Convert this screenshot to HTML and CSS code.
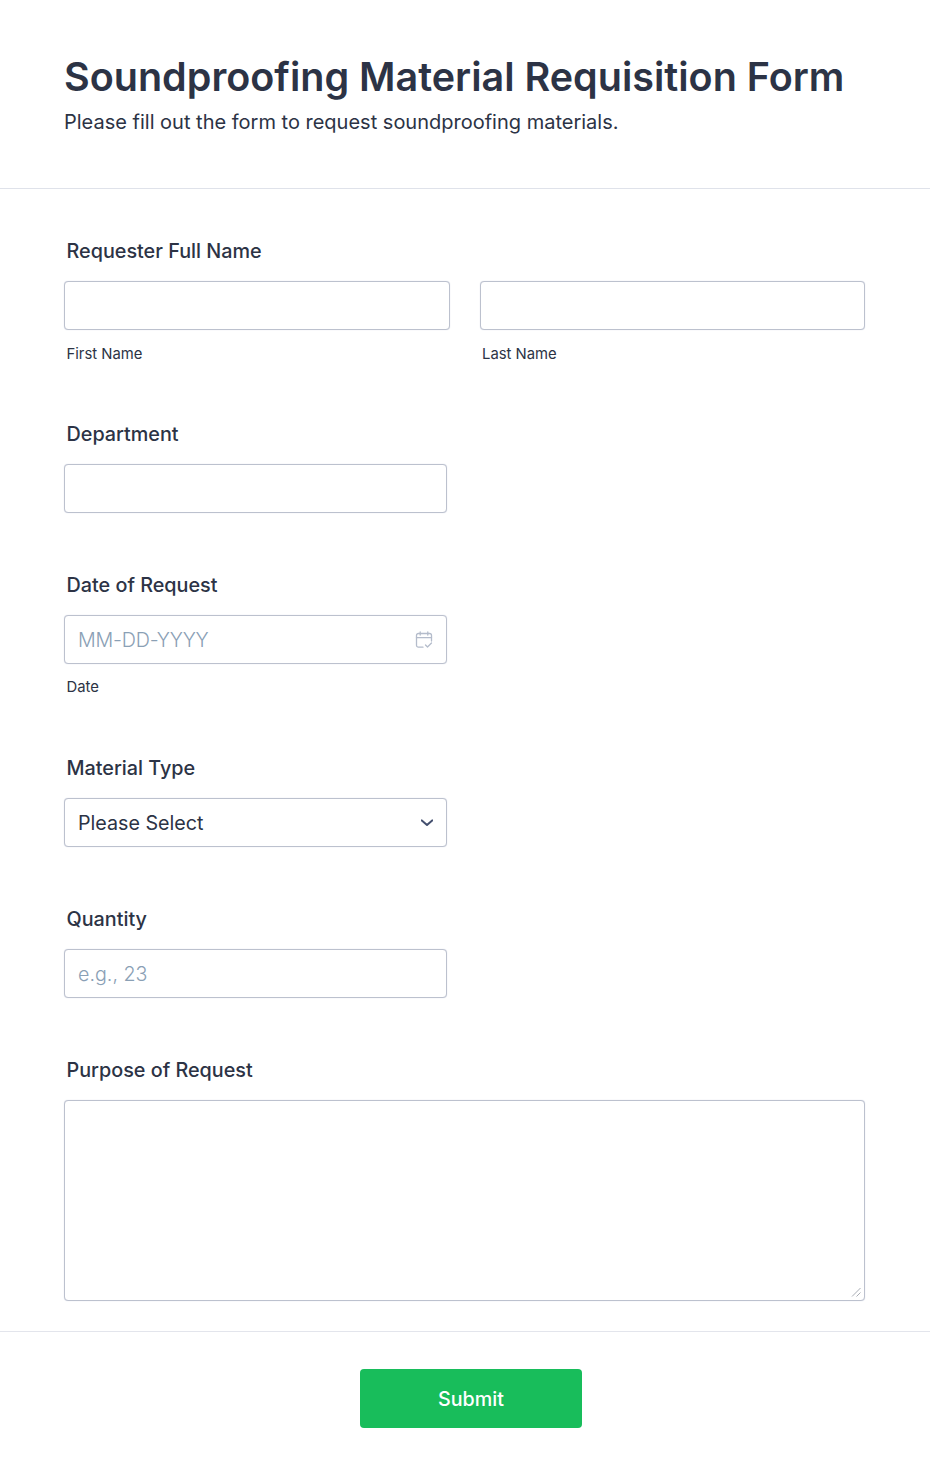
FILE: index.html
```html
<!DOCTYPE html>
<html lang="en">
<head>
<meta charset="utf-8">
<title>Soundproofing Material Requisition Form</title>
<link rel="stylesheet" href="styles.css">
</head>
<body>
<form class="form">
  <header class="form-header">
    <h1 class="form-title">Soundproofing Material Requisition Form</h1>
    <p class="form-subtitle">Please fill out the form to request soundproofing materials.</p>
  </header>
  <div class="form-body">
    <div class="field">
      <label class="field-label">Requester Full Name</label>
      <div class="name-row">
        <div class="name-col">
          <div class="input"></div>
          <div class="sublabel">First Name</div>
        </div>
        <div class="name-col">
          <div class="input"></div>
          <div class="sublabel">Last Name</div>
        </div>
      </div>
    </div>
    <div class="field">
      <label class="field-label">Department</label>
      <div class="input input-narrow"></div>
    </div>
    <div class="field">
      <label class="field-label">Date of Request</label>
      <div class="input input-narrow input-content">
        <span class="placeholder placeholder-date">MM-DD-YYYY</span>
        <svg class="calendar" width="18" height="18" viewBox="0 0 18 18" fill="none" stroke="#b4bccb" stroke-width="1.3" stroke-linecap="round" stroke-linejoin="round">
          <path d="M8 16.2H3.4A1.9 1.9 0 0 1 1.500 14.300V4.400A1.900 1.900 0 0 1 3.400 2.500H14.600A1.900 1.900 0 0 1 16.500 4.400V10"/>
          <path d="M1.500 6.700H16.500"/>
          <path d="M5.200 1V4M12.800 1V4"/>
          <path d="M10.500 14L12.500 16L16.500 12"/>
        </svg>
      </div>
      <div class="sublabel">Date</div>
    </div>
    <div class="field">
      <label class="field-label">Material Type</label>
      <div class="input input-narrow input-content input-select">
        <span class="select-value">Please Select</span>
        <svg class="chevron" width="12" height="8" viewBox="0 0 12 8" fill="none" stroke="#44506f" stroke-width="2" stroke-linecap="round" stroke-linejoin="round">
          <path d="M0.800 1.400L6 6L11.200 1.400"/>
        </svg>
      </div>
    </div>
    <div class="field">
      <label class="field-label">Quantity</label>
      <div class="input input-narrow input-content">
        <span class="placeholder">e.g., 23</span>
      </div>
    </div>
    <div class="field field-last">
      <label class="field-label">Purpose of Request</label>
      <div class="input textarea">
        <svg class="resizer" width="10" height="10" viewBox="0 0 10 10" fill="none" stroke="#a9adb5" stroke-width="1">
          <path d="M1 9.500L9.500 1M5.500 9.500L9.500 5.500"/>
        </svg>
      </div>
    </div>
  </div>
  <div class="form-footer">
    <button class="submit" type="button">Submit</button>
  </div>
</form>
</body>
</html>
```
FILE: styles.css
```css
* {
  box-sizing: border-box;
}
html, body {
  margin: 0;
  padding: 0;
  background: #fff;
}
body {
  font-family: Inter, "Liberation Sans", sans-serif;
  color: #2c3345;
}
.form {
  width: 930px;
  height: 1478px;
}
.form-header {
  height: 189px;
  padding: 52px 64px 0;
  border-bottom: 1px solid #dfe2ea;
}
.form-title {
  margin: 0 0 6px;
  font-size: 39.5px;
  line-height: 50px;
  font-weight: 600;
  white-space: nowrap;
}
.form-subtitle {
  margin: 0;
  font-size: 20px;
  line-height: 28px;
  font-weight: 400;
  white-space: nowrap;
}
.form-body {
  padding: 50px 64px 0;
}
.field {
  margin-bottom: 60px;
}
.field-last {
  margin-bottom: 0;
}
.field-label {
  display: block;
  height: 24px;
  margin: 0 0 18px 2.5px;
  font-size: 19.8px;
  line-height: 24px;
  font-weight: 500;
}
.name-row {
  display: flex;
  gap: 30px;
  width: 801px;
}
.name-col {
  flex: 1;
}
.input {
  height: 49px;
  background: #fff;
  border: 1px solid #bcc1ce;
  border-radius: 4px;
  box-shadow: 0 0 1px #c8cddc;
}
.input-narrow {
  width: 383px;
}
.input-content {
  display: flex;
  align-items: center;
  justify-content: space-between;
  padding: 0 14px 0 13px;
  font-size: 19.7px;
}
.input-select {
  padding-right: 13px;
}
.placeholder {
  color: #8aa0b5;
  font-weight: 300;
}
.placeholder-date {
  letter-spacing: -0.2px;
}
.calendar {
  flex: none;
  margin-right: -1px;
}
.chevron {
  flex: none;
}
.sublabel {
  height: 32px;
  padding: 14px 0 0 2.5px;
  font-size: 14.85px;
  line-height: 18px;
}
.name-col .sublabel {
  padding-top: 15px;
}
.textarea {
  position: relative;
  width: 801px;
  height: 201px;
}
.resizer {
  position: absolute;
  right: 3px;
  bottom: 3px;
}
.form-footer {
  margin-top: 30px;
  padding: 37px 0 0 360px;
  border-top: 1px solid #e3e5ec;
}
.submit {
  display: block;
  width: 222px;
  height: 59px;
  padding: 0;
  border: 0;
  border-radius: 4px;
  background: #18bd5b;
  color: #fff;
  font-family: inherit;
  font-size: 19.7px;
  font-weight: 500;
}
```
